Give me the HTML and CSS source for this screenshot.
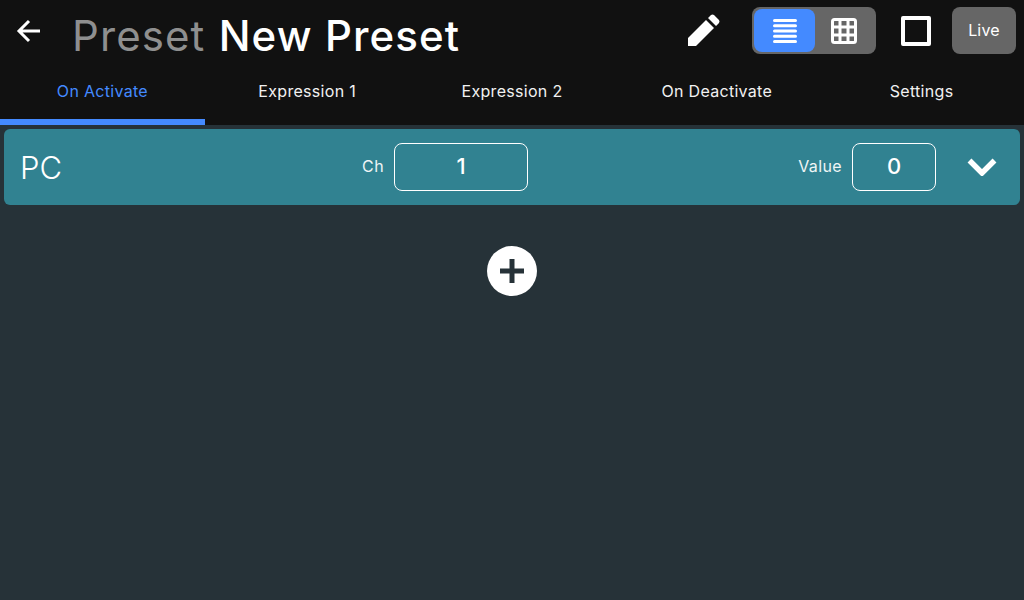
FILE: index.html
```html
<!DOCTYPE html>
<html lang="en">
<head>
    <meta charset="UTF-8">
    <title>Preset</title>
    <link rel="stylesheet" href="styles.css">
</head>
<body>
    <div class="topbar">
        <button class="back-btn">
            <svg width="24" height="24" viewBox="0 0 24 24"><path d="M25 12H3M13 2 3 12l10 10" fill="none" stroke="#fff" stroke-width="3"/></svg>
        </button>
        <h1 class="title"><span class="title-kind">Preset</span> New Preset</h1>
        <svg class="pencil" width="32" height="32" viewBox="0 0 32 32"><path d="M0 32v-8L18 6l8 8L8 32zM20 4l3-3q1.500-1 3 0l5 5q1 1.500 0 3l-3 3z" fill="#fff"/></svg>
        <div class="view-toggle">
            <div class="view-btn active">
                <svg width="24" height="26" viewBox="0 0 24 26"><path d="M1.500 2.500h21M1.500 7.700h21M1.500 13h21M1.500 18.300h21M1.500 23.500h21" stroke="#fff" stroke-width="3" stroke-linecap="round"/></svg>
            </div>
            <div class="view-btn">
                <svg class="grid-icon" width="26" height="26" viewBox="0 0 26 26"><rect x="1.500" y="1.500" width="23" height="23" rx="2" fill="none" stroke="#fff" stroke-width="3"/><path d="M9 1v24M17 1v24M1 9h24M1 17h24" stroke="#fff" stroke-width="3"/></svg>
            </div>
        </div>
        <div class="stop-box"></div>
        <button class="live-btn">Live</button>
    </div>

    <div class="tabs">
        <div class="tab active">On Activate</div>
        <div class="tab">Expression 1</div>
        <div class="tab">Expression 2</div>
        <div class="tab">On Deactivate</div>
        <div class="tab">Settings</div>
    </div>

    <div class="content">
        <div class="message-row">
            <div class="message-name">PC</div>
            <div class="field field-ch">
                <label>Ch</label>
                <div class="value-box box-ch">1</div>
            </div>
            <div class="field field-value">
                <label>Value</label>
                <div class="value-box box-value">0</div>
            </div>
            <svg class="chevron" width="30" height="18" viewBox="0 0 30 18"><path d="M2.500 2.500 15 15 27.500 2.500" fill="none" stroke="#fff" stroke-width="5.500"/></svg>
        </div>
        <button class="add-btn">
            <svg width="26" height="26" viewBox="0 0 26 26"><path d="M13 1v24M1 13h24" stroke="#263238" stroke-width="5"/></svg>
        </button>
    </div>
</body>
</html>
```
FILE: styles.css
```css
body {
    font-family: Inter, "Open Sans", sans-serif;
    margin: 0;
    width: 1024px;
    height: 600px;
    overflow: hidden;
    background-color: #263238;
    color: #fff;
    display: flex;
    flex-direction: column;
}

button {
    font-family: inherit;
    border: none;
    padding: 0;
    cursor: pointer;
}

.topbar {
    height: 70px;
    background-color: #111;
    display: flex;
    align-items: center;
    flex-shrink: 0;
}

.back-btn {
    background: none;
    width: 24px;
    height: 24px;
    margin: 0 0 9px 16px;
}

.title {
    font-size: 42px;
    font-weight: 500;
    letter-spacing: 1.1px;
    margin: 0 0 0 32px;
    flex: 1;
    white-space: nowrap;
}

.title-kind {
    color: #8f8f8f;
    font-weight: 400;
    margin-right: 1px;
}

.pencil {
    margin: 0 32px 11px 0;
}

.view-toggle {
    width: 124px;
    height: 47px;
    box-sizing: border-box;
    padding: 2px;
    background-color: #666;
    border-radius: 8px;
    display: flex;
    margin-bottom: 9px;
}

.view-btn {
    width: 60px;
    display: flex;
    align-items: center;
    justify-content: center;
}

.view-btn.active {
    width: 61px;
    background-color: #448aff;
    border-radius: 8px;
}

.view-btn:last-child {
    flex: 1;
}

.grid-icon {
    margin-right: 2px;
}

.stop-box {
    width: 30px;
    height: 30px;
    box-sizing: border-box;
    border: 4px solid #fff;
    border-radius: 2px;
    margin: 0 21px 9px 25px;
}

.live-btn {
    width: 64px;
    height: 47px;
    margin: 0 8px 9px 0;
    padding-bottom: 2px;
    background-color: #666;
    color: #fff;
    border-radius: 8px;
    font-size: 16px;
    letter-spacing: 0.2px;
}

.tabs {
    height: 55px;
    background-color: #111;
    display: flex;
    flex-shrink: 0;
}

.tab {
    flex: 1;
    text-align: center;
    font-size: 16px;
    letter-spacing: 0.3px;
    line-height: 42px;
    color: #f2f2f2;
}

.tab.active {
    color: #448aff;
    border-bottom: 6px solid #448aff;
    height: 49px;
}

.content {
    flex: 1;
    padding: 4px;
    display: flex;
    flex-direction: column;
    align-items: center;
}

.message-row {
    align-self: stretch;
    height: 76px;
    background-color: #318291;
    border-radius: 6px;
    display: flex;
    align-items: center;
}

.message-name {
    font-size: 31px;
    font-weight: 300;
    width: 340px;
    padding-left: 16px;
    box-sizing: border-box;
}

.field {
    display: flex;
    align-items: center;
    gap: 10px;
}

.field label {
    font-size: 16px;
    letter-spacing: 0.4px;
    color: #eef5f6;
    margin-top: -3px;
}

.field-ch {
    width: 184px;
    justify-content: flex-end;
}

.field-value {
    width: 408px;
    justify-content: flex-end;
}

.value-box {
    height: 48px;
    box-sizing: border-box;
    border: 1px solid #fff;
    border-radius: 8px;
    padding-bottom: 2px;
    font-size: 22px;
    font-weight: 500;
    display: flex;
    align-items: center;
    justify-content: center;
}

.box-ch {
    width: 134px;
}

.box-value {
    width: 84px;
}

.chevron {
    margin-left: 31px;
}

.add-btn {
    width: 50px;
    height: 50px;
    margin-top: 41px;
    border-radius: 50%;
    background-color: #fff;
    display: flex;
    align-items: center;
    justify-content: center;
}
```
